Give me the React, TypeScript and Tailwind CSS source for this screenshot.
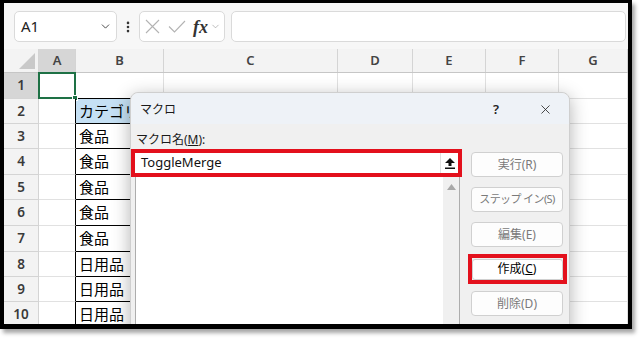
import { X, ChevronDown, EllipsisVertical } from "lucide-react";

const jp = { fontFamily: '"Noto Sans", "Noto Sans CJK JP", sans-serif' };

const colWidths = [35, 37, 88, 174, 75, 73, 73, 69];
const colNames = ["", "A", "B", "C", "D", "E", "F", "G"];
const rowHeights = [26, 25, 25, 26, 25, 26, 26, 25, 25, 26];
const bValues = ["", "カテゴリ", "食品", "食品", "食品", "食品", "食品", "日用品", "日用品", "日用品"];

function Toolbar() {
  return (
    <div className="flex h-[46px] items-start pl-[10px] pt-[8px] pr-[2px]">
      <div className="flex h-[31px] w-[103px] items-center justify-between rounded-[5px] border border-[#dadada] bg-white pl-[6px] pr-[4px]">
        <span className="text-[15px] text-[#222]" style={jp}>A1</span>
        <ChevronDown size={13} strokeWidth={1.6} className="text-[#333]" />
      </div>
      <div className="flex h-[31px] w-[22px] items-center justify-center">
        <EllipsisVertical size={14} strokeWidth={2.5} className="text-[#333]" />
      </div>
      <div className="flex h-[31px] w-[86px] items-center rounded-[5px] border border-[#dadada] bg-white pl-[5px]">
        {/* cancel */}
        <svg width="15" height="15" viewBox="0 0 15 15">
          <path d="M1 1 L14 14 M14 1 L1 14" stroke="#b3b3b3" strokeWidth="1.1" fill="none" />
        </svg>
        {/* enter */}
        <svg width="18" height="13" viewBox="0 0 18 13" className="ml-[8px]">
          <path d="M1 6.5 L6.5 12 L17 1" stroke="#b3b3b3" strokeWidth="1.1" fill="none" />
        </svg>
        <span className="ml-[7px] text-[18px] font-bold italic leading-none text-[#333]" style={{ fontFamily: '"Liberation Serif", serif' }}>
          fx
        </span>
        <ChevronDown size={11} strokeWidth={1.4} className="ml-[2px] text-[#999]" />
      </div>
      <div className="ml-[6px] h-[31px] flex-1 rounded-[5px] border border-[#dadada] bg-white" />
    </div>
  );
}

function HeaderRow() {
  return (
    <div className="flex h-[24px] border-b border-[#c6c6c6] bg-[#f3f3f3]">
      {colWidths.map((w, i) => (
        <div
          key={i}
          style={{ width: w }}
          className={`relative flex shrink-0 items-center justify-center border-r border-[#d4d4d4] text-[13px] font-semibold text-[#444] ${
            i === 1 ? "bg-[#d6d6d6]" : ""
          }`}
        >
          {i === 0 ? (
            <svg width="16" height="16" viewBox="0 0 16 16" className="absolute bottom-[3px] right-[3px]">
              <polygon points="16,0 16,16 0,16" fill="#c9c9c9" />
            </svg>
          ) : (
            <span style={jp}>{colNames[i]}</span>
          )}
        </div>
      ))}
    </div>
  );
}

function SheetRow({ index, height }: { index: number; height: number }) {
  const row = index + 1;
  const inTable = row >= 2;
  return (
    <div className="flex" style={{ height }}>
      <div
        style={{ width: colWidths[0] }}
        className={`flex shrink-0 items-center justify-center border-r border-b border-[#d4d4d4] text-[13.5px] font-semibold text-[#3a3a3a] ${
          row === 1 ? "bg-[#d6d6d6]" : "bg-[#f3f3f3]"
        }`}
      >
        <span style={jp}>{row}</span>
      </div>
      <div
        style={{ width: colWidths[1] }}
        className={`relative shrink-0 border-b border-[#e1e1e1] bg-white ${
          inTable ? "border-r border-r-black" : "border-r border-r-[#e1e1e1]"
        }`}
      >
        {row === 1 && (
          <div className="absolute -left-px -top-px h-[27px] w-[38px] border-2 border-[#1e7145]">
            <div className="absolute -bottom-[4px] -right-[4px] h-[6px] w-[6px] border border-white bg-[#1e7145]" />
          </div>
        )}
      </div>
      <div
        style={{ width: colWidths[2] }}
        className={`flex shrink-0 items-center border-r border-b border-b-black pl-[3px] text-[15px] text-black ${
          inTable ? "border-r-black" : "border-r-[#e1e1e1]"
        } ${row === 2 ? "bg-[#c5e0f4]" : "bg-white"}`}
      >
        <span className="whitespace-nowrap" style={jp}>{bValues[index]}</span>
      </div>
      {colWidths.slice(3).map((w, i) => (
        <div key={i} style={{ width: w }} className="shrink-0 border-r border-b border-[#e1e1e1] bg-white" />
      ))}
    </div>
  );
}

function UploadIcon() {
  return (
    <svg width="10" height="11" viewBox="0 0 10 11">
      <polygon points="5,0 10,5 6.5,5 6.5,8 3.5,8 3.5,5 0,5" fill="#111" />
      <rect x="0" y="9.5" width="10" height="1.5" fill="#111" />
    </svg>
  );
}

function DialogButton({ label, tight }: { label: React.ReactNode; tight?: boolean }) {
  return (
    <div
      className={`flex h-[25px] w-[92px] items-center justify-center whitespace-nowrap rounded-[4px] border border-[#d0d0d0] bg-[#fdfdfd] text-[#7a7a7a] ${
        tight ? "text-[11px] tracking-[-0.6px]" : "text-[12px]"
      }`}
      style={jp}
    >
      {label}
    </div>
  );
}

function MacroDialog() {
  return (
    <div className="absolute left-[126px] top-[89px] h-[250px] w-[440px] rounded-t-[8px] border border-[#cfcfcf] bg-[#f0f0f0] shadow-[0_4px_18px_rgba(0,0,0,0.3)]" style={jp}>
      <div className="flex h-[31px] items-center rounded-t-[8px] bg-[#eef2f7] pl-[9px] pt-[2px]">
        <span className="text-[12px] text-[#1a1a1a]">マクロ</span>
        <span className="ml-auto mr-[39px] text-[13px] font-semibold text-[#222]">?</span>
        <X size={15} strokeWidth={1.3} className="mr-[16px] text-[#222]" />
      </div>
      <div className="relative flex">
        <div className="w-[335px] pt-[8px]">
          <div className="pl-[5px] text-[12px] leading-[16px] text-[#1a1a1a]">
            マクロ名(<span className="underline">M</span>):
          </div>
          <div className="mt-[1px] flex h-[28px] w-[331px] items-center border-4 border-[#e3101c] bg-white">
            <span className="pl-[6px] text-[13px] text-[#111]">ToggleMerge</span>
            <div className="ml-auto flex h-full w-[18px] items-center justify-center border-l border-[#e0e0e0]">
              <UploadIcon />
            </div>
          </div>
          <div className="ml-[4px] flex h-[150px] w-[325px] border-x border-[#adadad] bg-white">
            <div className="ml-auto flex w-[16px] justify-center bg-[#f0f0f0] pt-[7px]">
              <svg width="9" height="6" viewBox="0 0 9 6">
                <polygon points="4.5,0 9,6 0,6" fill="#a8a8a8" />
              </svg>
            </div>
          </div>
        </div>
        <div className="ml-[1px] flex w-[100px] flex-col items-center pt-[28px]">
          <DialogButton label="実行(R)" />
          <div className="mt-[10px]">
            <DialogButton label="ステップ イン(S)" tight />
          </div>
          <div className="mt-[10px]">
            <DialogButton label="編集(E)" />
          </div>
          <div className="mt-[7px] flex h-[30px] w-[99px] items-center justify-center border-4 border-[#e3101c] bg-[#f0f0f0]">
            <div className="flex h-[21px] w-[91px] items-center justify-center rounded-[3px] border border-[#d0d0d0] bg-white text-[12px] text-black">
              作成(<span className="underline">C</span>)
            </div>
          </div>
          <div className="mt-[7px]">
            <DialogButton label="削除(D)" />
          </div>
        </div>
      </div>
    </div>
  );
}

export default function App() {
  return (
    <div className="h-[338px] w-[641px] bg-white">
      <div className="relative h-[329px] w-[632px] overflow-hidden border-x-4 border-t-[3px] border-b-[5px] border-black bg-[#f7f7f7] shadow-[3px_4px_4px_rgba(0,0,0,0.35)]">
        <Toolbar />
        <div>
          <HeaderRow />
          {rowHeights.map((h, i) => (
            <SheetRow key={i} index={i} height={h} />
          ))}
        </div>
        <MacroDialog />
      </div>
    </div>
  );
}
